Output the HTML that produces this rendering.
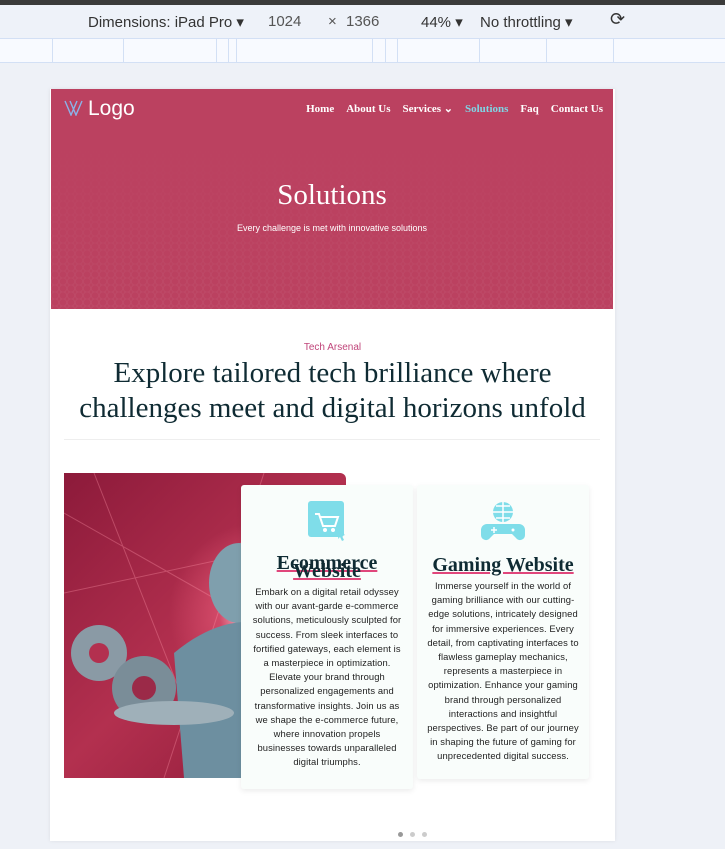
<!DOCTYPE html>
<html><head><meta charset="utf-8"><style>
*{margin:0;padding:0;box-sizing:border-box}
body{width:725px;height:849px;overflow:hidden;background:#eef1f7;font-family:"Liberation Sans",sans-serif;position:relative}
.top{position:absolute;left:0;top:0;width:725px;height:5px;background:#3b3b3b}
.bar{position:absolute;left:0;top:5px;width:725px;height:33px;background:#eef2f9;font-size:15px;color:#333}
.bar span{position:absolute;top:8px}
.ruler{position:absolute;left:0;top:38px;width:725px;height:25px;background:#f8faff;border-top:1px solid #d3e0f5;border-bottom:1px solid #d3e0f5}
.ruler i{position:absolute;top:0;width:1px;height:23px;background:#d3e0f5}
.page{position:absolute;left:50px;top:89px;width:565px;height:752px;background:#fff;box-shadow:0 0 4px rgba(0,0,0,.08)}
.hero{position:absolute;left:1px;top:0;width:562px;height:220px;background:#bb4160;overflow:hidden}
.hex{position:absolute;left:0;top:0;width:100%;height:100%;background-image:radial-gradient(circle at 50% 50%,transparent 3px,rgba(255,255,255,.07) 3.5px,transparent 4.5px);background-size:8px 7px;-webkit-mask-image:linear-gradient(to bottom,transparent 20%,#000 100%)}
.logo{position:absolute;left:13px;top:8px;color:#fff;font-size:21px}
.nav{position:absolute;top:13px;right:10px;font-family:"Liberation Serif",serif;font-weight:bold;font-size:11px;color:#fff}
.nav span{margin-left:12px}
.hero h1{position:absolute;top:90px;width:100%;text-align:center;font-family:"Liberation Serif",serif;font-weight:normal;color:#fff;font-size:29px}
.hero p{position:absolute;top:134px;width:100%;text-align:center;color:#fff;font-size:9px}
.tag{position:absolute;top:253px;width:100%;text-align:center;color:#c0457a;font-size:10px}
.h2{position:absolute;top:267px;width:100%;text-align:center;font-family:"Liberation Serif",serif;color:#0f2b33;font-size:29px;line-height:35px}
.hr{position:absolute;left:14px;top:350px;width:536px;height:1px;background:#eee}
.img{position:absolute;left:14px;top:384px;width:282px;height:305px;background:radial-gradient(circle at 195px 140px,#fff 0,#ffd6e0 10px,rgba(230,90,120,.6) 40px,transparent 90px),linear-gradient(135deg,#8c1a3a,#b3304f 50%,#8a1836);border-radius:0 6px 0 0;overflow:hidden}
.card{position:absolute;background:#f9fdfb;box-shadow:0 2px 6px rgba(0,0,0,.08);text-align:center;border-radius:3px}
.card h3{font-family:"Liberation Serif",serif;font-weight:bold;font-size:20px;color:#0f2b33;line-height:16px}
.card h3 u{text-decoration:underline;text-decoration-color:#e0467b;text-decoration-thickness:2px}
.card p{font-size:9.4px;line-height:14.2px;color:#222;padding:0 6px;letter-spacing:.1px}
.dots{position:absolute;top:743px;left:348px;height:5px;line-height:0}
.dots b{display:inline-block;width:5px;height:5px;border-radius:50%;background:#ccc;margin-right:7px}
</style></head><body>
<div class="top"></div>
<div class="bar">
<span style="left:88px">Dimensions: iPad Pro ▾</span>
<span style="left:268px;color:#555">1024</span>
<span style="left:328px;color:#555">×</span>
<span style="left:346px;color:#555">1366</span>
<span style="left:421px">44% ▾</span>
<span style="left:480px">No throttling ▾</span>
<span style="left:610px;font-size:18px;top:4px">⟳</span>
</div>
<div class="ruler"><i style="left:52px"></i><i style="left:123px"></i><i style="left:216px"></i><i style="left:228px"></i><i style="left:236px"></i><i style="left:372px"></i><i style="left:385px"></i><i style="left:397px"></i><i style="left:479px"></i><i style="left:546px"></i><i style="left:613px"></i></div>
<div class="page">
<div class="hero"><div class="hex"></div>
<div class="logo"><svg width="24" height="16" viewBox="0 0 24 16" style="vertical-align:-1px"><path d="M1 1l6 14l6-14M6 1l6 14l6-14" stroke="#8bb3e8" stroke-width="1.4" fill="none"/></svg>Logo</div>
<div class="nav"><span>Home</span><span>About Us</span><span>Services ⌄</span><span style="color:#7fd6e6">Solutions</span><span>Faq</span><span>Contact Us</span></div>
<h1>Solutions</h1><p>Every challenge is met with innovative solutions</p></div>
<div class="tag">Tech Arsenal</div>
<div class="h2">Explore tailored tech brilliance where<br>challenges meet and digital horizons unfold</div>
<div class="hr"></div>
<div class="img"><svg width="282" height="305"><g stroke="rgba(255,150,170,.35)" fill="none"><path d="M0 40L282 200M30 0L150 305M200 0L100 305M0 120L282 60"/></g>
<ellipse cx="175" cy="110" rx="30" ry="40" fill="#7f9fad"/><path d="M110 180q60-50 120-20v145H120z" fill="#6d8fa0"/>
<circle cx="35" cy="180" r="28" fill="#8a9aa5"/><circle cx="35" cy="180" r="10" fill="#b3304f"/><circle cx="80" cy="215" r="32" fill="#7a8d98"/><circle cx="80" cy="215" r="12" fill="#9b2a48"/><ellipse cx="110" cy="240" rx="60" ry="12" fill="#9fb0b9"/></svg></div>
<div class="card" style="left:191px;top:396px;width:172px;height:304px">
<svg width="40" height="42" style="margin-top:15px" viewBox="0 0 40 42"><rect x="1" y="1" width="36" height="36" rx="3" fill="#7fdde9"/><path d="M8 14h4l4 12h12l3-9H13" stroke="#fff" stroke-width="2" fill="none"/><circle cx="18" cy="30" r="2" fill="#fff"/><circle cx="26" cy="30" r="2" fill="#fff"/><path d="M32 30l6 5-3 1 2 4-2 1-2-4-2 2z" fill="#7fdde9"/></svg>
<h3 style="margin-top:8px"><u>Ecommerce</u><br><span style="position:relative;top:-8px"><u>Website</u></span></h3>
<p style="margin-top:-2px;padding:0 11px">Embark on a digital retail odyssey with our avant-garde e-commerce solutions, meticulously sculpted for success. From sleek interfaces to fortified gateways, each element is a masterpiece in optimization. Elevate your brand through personalized engagements and transformative insights. Join us as we shape the e-commerce future, where innovation propels businesses towards unparalleled digital triumphs.</p></div>
<div class="card" style="left:367px;top:396px;width:172px;height:294px">
<svg width="44" height="42" style="margin-top:15px" viewBox="0 0 44 42"><circle cx="22" cy="12" r="10" fill="#7fdde9"/><path d="M12 12h20M22 2v20M15 6h14M15 18h14" stroke="#fff" stroke-width="1.5"/><path d="M6 24h32a6 6 0 0 1 6 6v5a5 5 0 0 1-9 3l-4-4H13l-4 4a5 5 0 0 1-9-3v-5a6 6 0 0 1 6-6z" fill="#7fdde9"/><path d="M10 30h6M13 27v6" stroke="#fff" stroke-width="1.5"/><circle cx="32" cy="30" r="1.5" fill="#fff"/></svg>
<h3 style="margin-top:10px"><u>Gaming Website</u></h3>
<p style="margin-top:6px">Immerse yourself in the world of gaming brilliance with our cutting-edge solutions, intricately designed for immersive experiences. Every detail, from captivating interfaces to flawless gameplay mechanics, represents a masterpiece in optimization. Enhance your gaming brand through personalized interactions and insightful perspectives. Be part of our journey in shaping the future of gaming for unprecedented digital success.</p></div>
<div class="dots"><b style="background:#999"></b><b></b><b></b></div>
</div>
</body></html>
